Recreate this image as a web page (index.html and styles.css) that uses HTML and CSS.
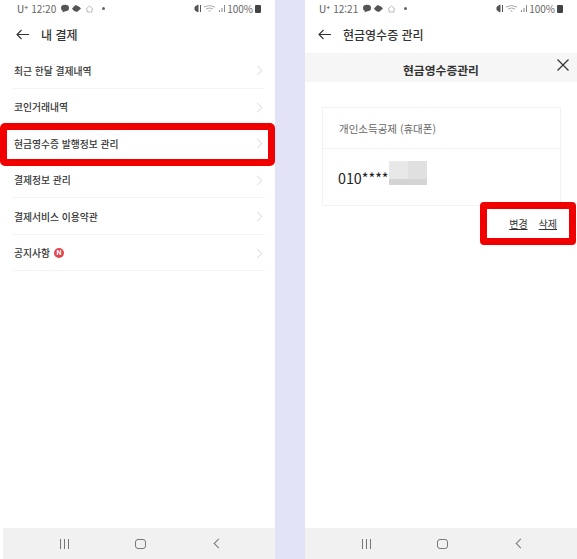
FILE: index.html
```html
<!DOCTYPE html>
<html lang="ko">
  <head>
    <meta charset="utf-8" />
    <meta name="viewport" content="width=device-width, initial-scale=1.0" />
    <title>현금영수증 관리</title>
    <link rel="stylesheet" href="styles.css">
  </head>
  <body>
    <div class="container">
      <!-- Left phone -->
      <div class="phone phone-left">
        <div class="status">
          <span class="carrier">U<sup>+</sup></span>
          <span>12:20</span>
          <svg class="ico-notify" width="33" height="9" viewBox="0 0 33 9">
            <ellipse cx="4" cy="4" rx="4" ry="3.300" fill="#555" />
            <path d="M2 6.500 1.500 8.600 4.500 7z" fill="#555" />
            <path d="M11 4.500 14.500 1 18 2.500 20 4.500 16 8 13 7z" fill="#555" />
            <path d="M25 5 28.500 2 32 5M26 5V8H31V5" fill="none" stroke="#aaa" stroke-width=".8" />
          </svg>
          <span class="dot"></span>
          <span class="status-right">
            <svg width="32" height="9" viewBox="0 0 32 9">
              <path d="M1 3 4 1V8L1 6zM6.500 1V8" fill="#555" stroke="#555" stroke-width="1" />
              <path d="M10 3Q15.500 0 21 3M12 5Q15.500 3 19 5M14.500 7H16.500" fill="none" stroke="#aaa" stroke-width="1" />
              <path d="M25.500 8V6M28 8V4M30.500 8V1" stroke="#888" stroke-width="1" />
            </svg>
            <span>100%</span>
            <span class="battery"></span>
          </span>
        </div>
        <div class="header">
          <svg class="back" width="13" height="11" viewBox="0 0 13 11">
            <path d="M13 5.500H1M5.500 1 1 5.500 5.500 10" fill="none" stroke="#333" stroke-width="1.100" />
          </svg>
          <span class="header-title">내 결제</span>
        </div>
        <div class="menu">
          <div class="menu-row"><span>최근 한달 결제내역</span><i class="chevron"></i></div>
          <div class="menu-row"><span>코인거래내역</span><i class="chevron"></i></div>
          <div class="menu-row marked"><span>현금영수증 발행정보 관리</span><i class="chevron"></i></div>
          <div class="menu-row"><span>결제정보 관리</span><i class="chevron"></i></div>
          <div class="menu-row"><span>결제서비스 이용약관</span><i class="chevron"></i></div>
          <div class="menu-row"><span>공지사항</span><b class="badge">N</b><i class="chevron"></i></div>
        </div>
        <div class="navbar">
          <span class="nav-lines"><i></i><i></i><i></i></span>
          <span class="nav-home"></span>
          <span class="nav-back"></span>
        </div>
      </div>

      <div class="gap"></div>

      <!-- Right phone -->
      <div class="phone phone-right">
        <div class="status">
          <span class="carrier">U<sup>+</sup></span>
          <span>12:21</span>
          <svg class="ico-notify" width="33" height="9" viewBox="0 0 33 9">
            <ellipse cx="4" cy="4" rx="4" ry="3.300" fill="#555" />
            <path d="M2 6.500 1.500 8.600 4.500 7z" fill="#555" />
            <path d="M11 4.500 14.500 1 18 2.500 20 4.500 16 8 13 7z" fill="#555" />
            <path d="M25 5 28.500 2 32 5M26 5V8H31V5" fill="none" stroke="#aaa" stroke-width=".8" />
          </svg>
          <span class="dot"></span>
          <span class="status-right">
            <svg width="32" height="9" viewBox="0 0 32 9">
              <path d="M1 3 4 1V8L1 6zM6.500 1V8" fill="#555" stroke="#555" stroke-width="1" />
              <path d="M10 3Q15.500 0 21 3M12 5Q15.500 3 19 5M14.500 7H16.500" fill="none" stroke="#aaa" stroke-width="1" />
              <path d="M25.500 8V6M28 8V4M30.500 8V1" stroke="#888" stroke-width="1" />
            </svg>
            <span>100%</span>
            <span class="battery"></span>
          </span>
        </div>
        <div class="header">
          <svg class="back" width="13" height="11" viewBox="0 0 13 11">
            <path d="M13 5.500H1M5.500 1 1 5.500 5.500 10" fill="none" stroke="#333" stroke-width="1.100" />
          </svg>
          <span class="header-title">현금영수증 관리</span>
        </div>
        <div class="modal-bar">
          <span>현금영수증관리</span>
          <svg class="close" width="12" height="12" viewBox="0 0 12 12">
            <path d="M.5 .5 11.500 11.500M11.500 .5 .5 11.500" stroke="#333" stroke-width="1.200" />
          </svg>
        </div>
        <div class="content">
          <div class="card">
            <div class="card-head">개인소득공제 (휴대폰)</div>
            <div class="card-body">
              <span>010****</span>
              <span class="masked"></span>
            </div>
          </div>
          <div class="actions">
            <a>변경</a>
            <a>삭제</a>
          </div>
        </div>
        <div class="navbar">
          <span class="nav-lines"><i></i><i></i><i></i></span>
          <span class="nav-home"></span>
          <span class="nav-back"></span>
        </div>
      </div>
    </div>
  </body>
</html>
```

FILE: styles.css
```css
* {
  padding: 0;
  margin: 0;
  box-sizing: border-box;
  font-family: "Noto Sans CJK KR", "Noto Sans", sans-serif;
}
body {
  background-color: #ffffff;
  overflow: hidden;
}
.container {
  display: flex;
  width: 577px;
  height: 559px;
}
.phone {
  display: flex;
  flex-direction: column;
  height: 559px;
  background-color: #ffffff;
}
.phone-left {
  width: 275px;
}
.phone-right {
  width: 272px;
}
.gap {
  width: 30px;
  background-color: #e3e3f8;
}
.status {
  display: flex;
  align-items: center;
  gap: 3px;
  height: 17px;
  padding: 0 14px 0 17px;
  font-family: "Roboto", sans-serif;
  font-size: 10px;
  color: #666666;
}
.phone-right .status {
  padding-left: 14px;
  padding-right: 14px;
}
.carrier {
  font-size: 10px;
  color: #555555;
}
.carrier sup {
  font-family: "Roboto", sans-serif;
  font-size: 7px;
  line-height: 0;
  vertical-align: 3px;
}
.ico-notify {
  margin-left: 2px;
}
.dot {
  width: 3px;
  height: 3px;
  margin-left: 5px;
  border-radius: 50%;
  background-color: #666666;
}
.status-right {
  display: flex;
  align-items: center;
  gap: 1px;
  margin-left: auto;
  font-size: 10px;
}
.battery {
  width: 6px;
  height: 8px;
  margin-left: 1px;
  border-radius: 1px;
  background-color: #444444;
}
.header {
  display: flex;
  align-items: center;
  height: 35px;
  padding-left: 16px;
}
.phone-right .header {
  padding-left: 13px;
  padding-bottom: 2px;
  height: 36px;
}
.back {
  margin-right: 12px;
}
.header-title {
  font-size: 12px;
  font-weight: 500;
  color: #333333;
}
.menu {
  flex: 1;
  padding: 0 10px 0 13px;
}
.menu-row {
  position: relative;
  display: flex;
  align-items: center;
  height: 36.5px;
  padding-left: 1px;
  padding-top: 2px;
  border-bottom: 1px solid #f4f4f4;
  font-size: 9.8px;
  font-weight: 500;
  color: #333333;
}
.chevron {
  width: 7px;
  height: 7px;
  margin-left: auto;
  margin-right: 4px;
  border-top: 1px solid #e2e2e2;
  border-right: 1px solid #e2e2e2;
  transform: rotate(45deg);
}
.badge {
  display: flex;
  align-items: center;
  justify-content: center;
  width: 10px;
  height: 10px;
  margin-left: 4px;
  border-radius: 50%;
  background-color: #e0474f;
  color: #ffffff;
  font-family: "Roboto", sans-serif;
  font-size: 7px;
}
.marked::after {
  content: "";
  position: absolute;
  top: -2px;
  left: -13px;
  right: -10px;
  bottom: -5px;
  border: 7px solid #f00000;
  border-radius: 5px;
}
.modal-bar {
  position: relative;
  display: flex;
  align-items: center;
  justify-content: center;
  height: 29px;
  padding-top: 3px;
  background-color: #f6f6f6;
  font-size: 11.8px;
  font-weight: 700;
  color: #333333;
}
.close {
  position: absolute;
  right: 8px;
  top: 6px;
}
.content {
  flex: 1;
  padding: 25px 16px 0 17px;
}
.card {
  border: 1px solid #f2f2f2;
  height: 99px;
}
.card-head {
  display: flex;
  align-items: center;
  height: 41px;
  padding-left: 16px;
  border-bottom: 1px solid #f2f2f2;
  font-size: 10.5px;
  color: #666666;
}
.card-body {
  display: flex;
  align-items: center;
  height: 56px;
  padding-left: 15px;
  font-family: "Roboto", sans-serif;
  font-size: 14.3px;
  color: #222222;
}
.masked {
  width: 38px;
  height: 24px;
  margin-top: -8px;
  background:
    linear-gradient(transparent 75%, #d4d4d4 75%),
    linear-gradient(90deg, #e8e8e8 50%, #e0e0e0 50%);
}
.actions {
  position: relative;
  display: flex;
  justify-content: flex-end;
  align-items: center;
  gap: 11px;
  height: 35px;
  padding-right: 4px;
  font-size: 10px;
  color: #333333;
}
.actions a {
  text-decoration: underline;
}
.actions::after {
  content: "";
  box-sizing: border-box;
  position: absolute;
  top: -4px;
  left: 158px;
  right: -15px;
  height: 43px;
  border: 7px solid #f00000;
  border-radius: 4px;
}
.navbar {
  position: relative;
  display: flex;
  align-items: center;
  height: 31px;
  background-color: #f1f1f1;
}
.phone-left .navbar {
  margin-left: 3px;
}
.nav-lines {
  display: flex;
  gap: 3px;
  margin-left: 57px;
}
.phone-right .nav-lines {
  margin-left: 57px;
}
.nav-lines i {
  width: 1px;
  height: 10px;
  background-color: #777777;
}
.nav-home {
  width: 11px;
  height: 10px;
  margin-left: 66px;
  border: 1.2px solid #777777;
  border-radius: 3px;
}
.nav-back {
  width: 7px;
  height: 7px;
  margin-left: 69px;
  border-left: 1.2px solid #777777;
  border-bottom: 1.2px solid #777777;
  transform: rotate(45deg);
}
```
